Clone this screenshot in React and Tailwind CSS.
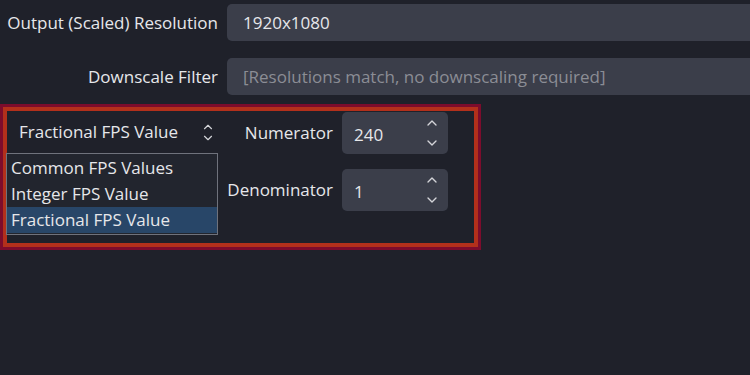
import { ChevronUp, ChevronDown } from 'lucide-react';

// Up/down chevron pair used by combo and spin boxes
function Stepper({ gap = '-mt-[3px]', size = 14, className = '' }) {
  return (
    <div className={`flex flex-col items-center text-[#d4d5d9] ${className}`}>
      <ChevronUp size={size} strokeWidth={2} />
      <ChevronDown size={size} strokeWidth={2} className={gap} />
    </div>
  );
}

function Row({ label, children, labelWidth = 'w-[218px]' }) {
  return (
    <div className="flex items-center gap-[9px]">
      <div className={`${labelWidth} shrink-0 text-right`}>{label}</div>
      {children}
    </div>
  );
}

function SpinBox({ value }) {
  return (
    <div className="w-[106px] h-[42px] rounded-[5px] bg-[#3b3e4a] flex items-center justify-between pl-[12px] pr-[8px]">
      <span className="pt-[3px]">{value}</span>
      <Stepper gap="mt-[4px]" size={16} />
    </div>
  );
}

export default function App() {
  return (
    <div className="w-[750px] h-[375px] overflow-hidden bg-[#1f212a] text-[#e6e7ea] text-[17px] font-['Open_Sans',sans-serif]">
      {/* Resolution rows */}
      <div className="flex flex-col gap-[17px] pt-[4px]">
        <Row label="Output (Scaled) Resolution">
          <div className="flex-1 h-[37px] rounded-l-[5px] bg-[#3b3e4a] flex items-center pl-[16px]">
            1920x1080
          </div>
        </Row>
        <Row label="Downscale Filter">
          <div className="flex-1 h-[37px] rounded-l-[5px] bg-[#3b3e4a] flex items-center pl-[16px] text-[#8b8d95]">
            [Resolutions match, no downscaling required]
          </div>
        </Row>
      </div>

      {/* Highlighted FPS section */}
      <div className="mt-[9px] w-[481px] h-[146px] border-[3px] border-[#7c0c2c]">
        <div className="h-full border-[4px] border-[#b3301b] flex">
          {/* FPS type combo with its open list */}
          <div className="w-[214px] shrink-0 flex flex-col">
            <div className="h-[40px] flex items-center justify-between pl-[12px] pr-[6px] mt-[1px]">
              <span>Fractional FPS Value</span>
              <Stepper />
            </div>
            <div className="w-[212px] -ml-px mt-[1px] border border-[#6f727c] bg-[#22252e] pt-[1px] pb-[1px]">
              <div className="h-[26px] flex items-center pl-[4px]">Common FPS Values</div>
              <div className="h-[26px] flex items-center pl-[4px]">Integer FPS Value</div>
              <div className="h-[26px] flex items-center pl-[4px] bg-[#284668]">Fractional FPS Value</div>
            </div>
          </div>

          {/* Numerator / denominator spin boxes */}
          <div className="flex flex-col gap-[15px] pt-[1px]">
            <Row label="Numerator" labelWidth="w-[112px]">
              <SpinBox value="240" />
            </Row>
            <Row label="Denominator" labelWidth="w-[112px]">
              <SpinBox value="1" />
            </Row>
          </div>
        </div>
      </div>
    </div>
  );
}
